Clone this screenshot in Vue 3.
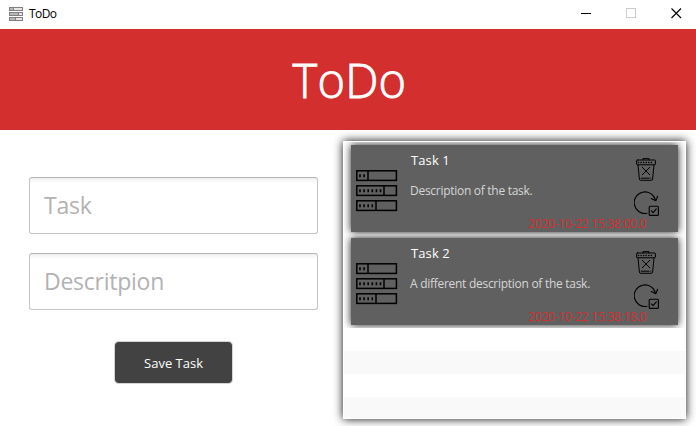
<script setup>
const tasks = [
  { title: 'Task 1', description: 'Description of the task.', date: '2020-10-22 15:38:00.0', id: 1 },
  { title: 'Task 2', description: 'A different description of the task.', date: '2020-10-22 15:38:18.0', id: 2 },
]
</script>

<template>
  <div class="window">
    <header class="titlebar">
      <svg class="app-icon" width="14" height="14" viewBox="0 0 14 14">
        <g fill="#e4e4e4" stroke="#808080">
          <rect x=".5" y=".5" width="13" height="3" />
          <rect x=".5" y="5.5" width="13" height="3" />
          <rect x=".5" y="10.5" width="13" height="3" />
          <path d="M4.5 .5v3M9.5 5.5v3M6.5 10.5v3" />
        </g>
        <path d="M1 2h3M1 7h8M1 12h5" stroke="#8a8a8a" />
      </svg>
      <span class="app-name">ToDo</span>
      <div class="controls">
        <svg width="11" height="11" viewBox="0 0 11 11"><path d="M0 5.5h10" stroke="#000" /></svg>
        <svg width="11" height="11" viewBox="0 0 11 11"><rect x=".5" y=".5" width="9" height="9" fill="none" stroke="#ccc" /></svg>
        <svg width="11" height="11" viewBox="0 0 11 11"><path d="M.5 .5l9.5 9.5M10 .5L.5 10" stroke="#000" stroke-width="1.1" /></svg>
      </div>
    </header>

    <div class="banner"><h1>ToDo</h1></div>

    <main class="content">
      <form class="form" @submit.prevent>
        <input class="field task-field" type="text" placeholder="Task" />
        <input class="field" type="text" placeholder="Descritpion" />
        <button class="save"><span>Save Task</span></button>
      </form>

      <section class="list">
        <div class="cells">
          <div v-for="task in tasks" :key="task.id" class="cell">
            <article class="card">
              <svg class="rows-icon" width="42" height="42" viewBox="0 0 42 42">
                <g fill="none" stroke="#000" stroke-width="1.5">
                  <rect x=".8" y=".8" width="39.6" height="9.6" />
                  <rect x=".8" y="15.8" width="39.6" height="9.6" />
                  <rect x=".8" y="30.8" width="39.6" height="9.6" />
                  <path d="M12 1v9.5M28 16v9.5M20 31v9.5" />
                </g>
                <g stroke="#000" stroke-width="3" stroke-dasharray="1.6 2.5">
                  <path d="M3.2 5.7h6.5M3.2 20.7h23M3.2 35.7h15" />
                </g>
              </svg>
              <div class="details">
                <h2>{{ task.title }}</h2>
                <p>{{ task.description }}</p>
                <time>{{ task.date }}</time>
              </div>
              <div class="actions">
                <svg class="trash" width="20" height="23" viewBox="0 0 20 23" fill="none" stroke="#000" stroke-linecap="round" stroke-linejoin="round">
                  <path d="M7 1.8V.6h6v1.2" />
                  <rect x=".6" y="2" width="18.8" height="4.8" rx=".8" />
                  <path d="M2.5 4.5h15" stroke-width="1.5" stroke-dasharray=".1 2.45" />
                  <path d="M2 7l1.4 14q.1 1.3 1.3 1.3h10.6q1.2 0 1.3-1.3L18 7M5.2 20.2h8M14.8 20.2h.1" />
                  <path d="M6.3 9.3l7.5 7.5M13.8 9.3l-7.5 7.5" />
                </svg>
                <svg width="25" height="25" viewBox="0 0 25 25" fill="none" stroke="#000" stroke-width="1.1" stroke-linecap="round" stroke-linejoin="round">
                  <path d="M13 22.3A10.8 10.8 0 1 1 21.4 8.8" />
                  <path d="M17.2 7.6l4.6 2.2 1.8-4.5" />
                  <rect x="15.2" y="15.2" width="9.2" height="9.2" rx="1" />
                  <path d="M17.3 19.8l1.8 1.8 3.2-3.7" />
                </svg>
              </div>
            </article>
          </div>
          <div v-for="n in 4" :key="n" class="empty"></div>
        </div>
      </section>
    </main>
  </div>
</template>

<style>
body { margin: 0; background: #fff; }
</style>

<style scoped>
* { box-sizing: border-box; }
.window {
  width: 696px;
  height: 426px;
  overflow: hidden;
  display: flex;
  flex-direction: column;
  background: #fff;
  font-family: "Open Sans", "Noto Sans", sans-serif;
}
.titlebar {
  height: 29px;
  flex: none;
  display: flex;
  align-items: center;
  padding: 0 14px 2px 9px;
}
.app-icon { margin-right: 6px; }
.app-name { font-size: 12px; letter-spacing: -.6px; line-height: 16px; color: #000; padding-top: 1px; }
.controls { margin-left: auto; display: flex; gap: 34px; }
.banner {
  height: 101px;
  flex: none;
  background: #d32f2f;
  display: flex;
  align-items: center;
  justify-content: center;
}
h1 {
  margin: 0;
  padding-left: 3px;
  color: #fff;
  font-size: 47px;
  font-weight: 300;
  line-height: 64px;
  letter-spacing: .2px;
  -webkit-text-stroke: .9px #fff;
}
.content { flex: 1; display: flex; padding: 11px 10px 7px 29px; }
.form {
  width: 289px;
  margin-right: 25px;
  padding-top: 36px;
  display: flex;
  flex-direction: column;
}
.field {
  width: 289px;
  height: 57px;
  flex: none;
  margin-bottom: 19px;
  padding: 0 14px 1px;
  border: 1px solid #c4c4c4;
  border-top-color: #b5b5b5;
  border-radius: 3px;
  background: linear-gradient(#efefef, #fff 5px);
  font: 23px "Open Sans", "Noto Sans", sans-serif;
  letter-spacing: -.25px;
  outline: none;
}
.field::placeholder { color: #b2b2b2; opacity: 1; }
.save {
  width: 119px;
  height: 43px;
  margin: 12px 0 0 85px;
  padding: 0;
  border: 1px solid #d4d4d4;
  border-radius: 4px;
  background: #424242;
  background-clip: padding-box;
  color: #fff;
  font: 13px "Open Sans", "Noto Sans", sans-serif;
  letter-spacing: 0;
}
.list {
  width: 343px;
  height: 278px;
  padding: 1px;
  background: #fff;
  box-shadow: 0 0 9px rgba(0, 0, 0, .95);
}
.cells { height: 276px; overflow: hidden; }
.cell { height: 93px; padding: 3px 7px; overflow: hidden; }
.card {
  width: 327px;
  height: 87px;
  display: flex;
  background: #606060;
  box-shadow: 0 0 8px rgba(0, 0, 0, .9);
  padding-left: 5px;
}
.rows-icon { margin-top: 25px; flex: none; }
.details { width: 236px; flex: none; padding: 6px 0 0 12px; display: flex; flex-direction: column; }
h2 { margin: 0; padding-left: 1px; font-size: 13px; line-height: 18px; font-weight: 400; color: #fff; letter-spacing: .1px; }
p { margin: 13px 0 0; font-size: 12px; line-height: 18px; color: #d6d6d6; letter-spacing: -.28px; white-space: nowrap; }
time { margin: 15px 0 0 118px; font-size: 12px; line-height: 18px; color: #d32f2f; letter-spacing: -.24px; white-space: nowrap; }
.actions { width: 25px; padding-top: 13px; flex: none; display: flex; flex-direction: column; gap: 10px; }
.trash { margin-left: 2px; }
.empty { height: 23px; }
.empty:nth-child(even) { background: #f9f9f9; }
</style>
